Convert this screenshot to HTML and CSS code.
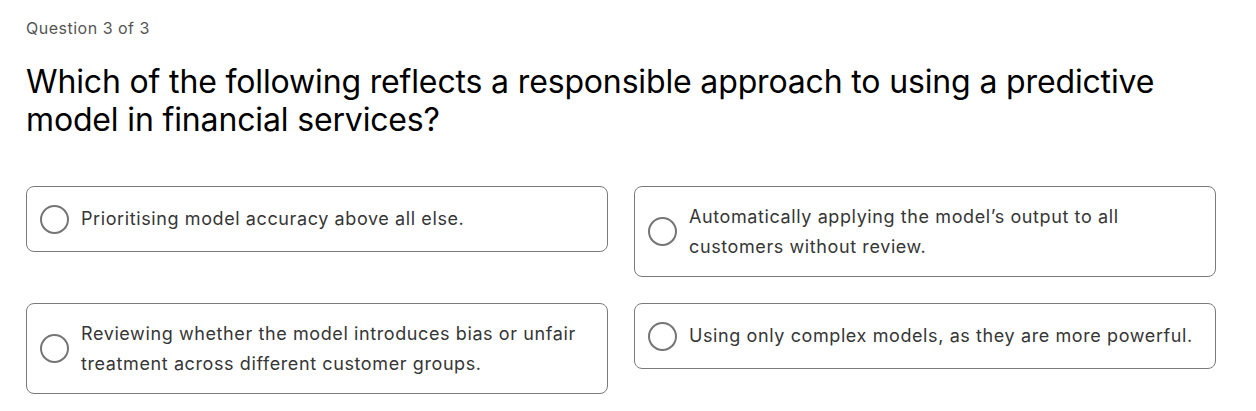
FILE: index.html
```html
<!DOCTYPE html>
<html lang="en">
<head>
<meta charset="utf-8">
<title>Quiz</title>
<link rel="stylesheet" href="styles.css">
</head>
<body>
<main class="quiz">
  <p class="progress">Question 3 of 3</p>
  <h1 class="question">Which of the following reflects a responsible approach to using a predictive model in financial services?</h1>
  <div class="options">
    <label class="option"><span class="radio"></span><span class="option-text">Prioritising model accuracy above all else.</span></label>
    <label class="option"><span class="radio"></span><span class="option-text">Automatically applying the model’s output to all customers without review.</span></label>
    <label class="option"><span class="radio"></span><span class="option-text">Reviewing whether the model introduces bias or unfair treatment across different customer groups.</span></label>
    <label class="option"><span class="radio"></span><span class="option-text">Using only complex models, as they are more powerful.</span></label>
  </div>
</main>
</body>
</html>
```
FILE: styles.css
```css
html, body {
  margin: 0;
  padding: 0;
  background: #ffffff;
}

body {
  font-family: Inter, "Noto Sans", "Liberation Sans", sans-serif;
  color: #000;
}

.quiz {
  width: 1190px;
  padding: 16px 26px 0;
}

.progress {
  margin: 0;
  font-size: 16px;
  line-height: 24px;
  letter-spacing: 0.5px;
  color: #555555;
}

.question {
  margin: 23px 0 0;
  font-size: 32px;
  line-height: 38px;
  font-weight: 400;
  letter-spacing: -0.15px;
  color: #000000;
  max-width: 1160px;
}

.options {
  margin-top: 47px;
  display: grid;
  grid-template-columns: 582px 582px;
  column-gap: 26px;
  row-gap: 26px;
  align-items: start;
}

.option {
  display: flex;
  align-items: center;
  gap: 12px;
  padding: 14.5px 14px 14.5px 13px;
  border: 1px solid #7a7a7a;
  border-radius: 8px;
  cursor: pointer;
}

.radio {
  flex: none;
  box-sizing: border-box;
  width: 29px;
  height: 29px;
  margin: 3px 0;
  border: 2px solid #757575;
  border-radius: 50%;
}

.option-text {
  font-size: 18px;
  line-height: 30px;
  letter-spacing: 0.6px;
  color: #363636;
}
```
